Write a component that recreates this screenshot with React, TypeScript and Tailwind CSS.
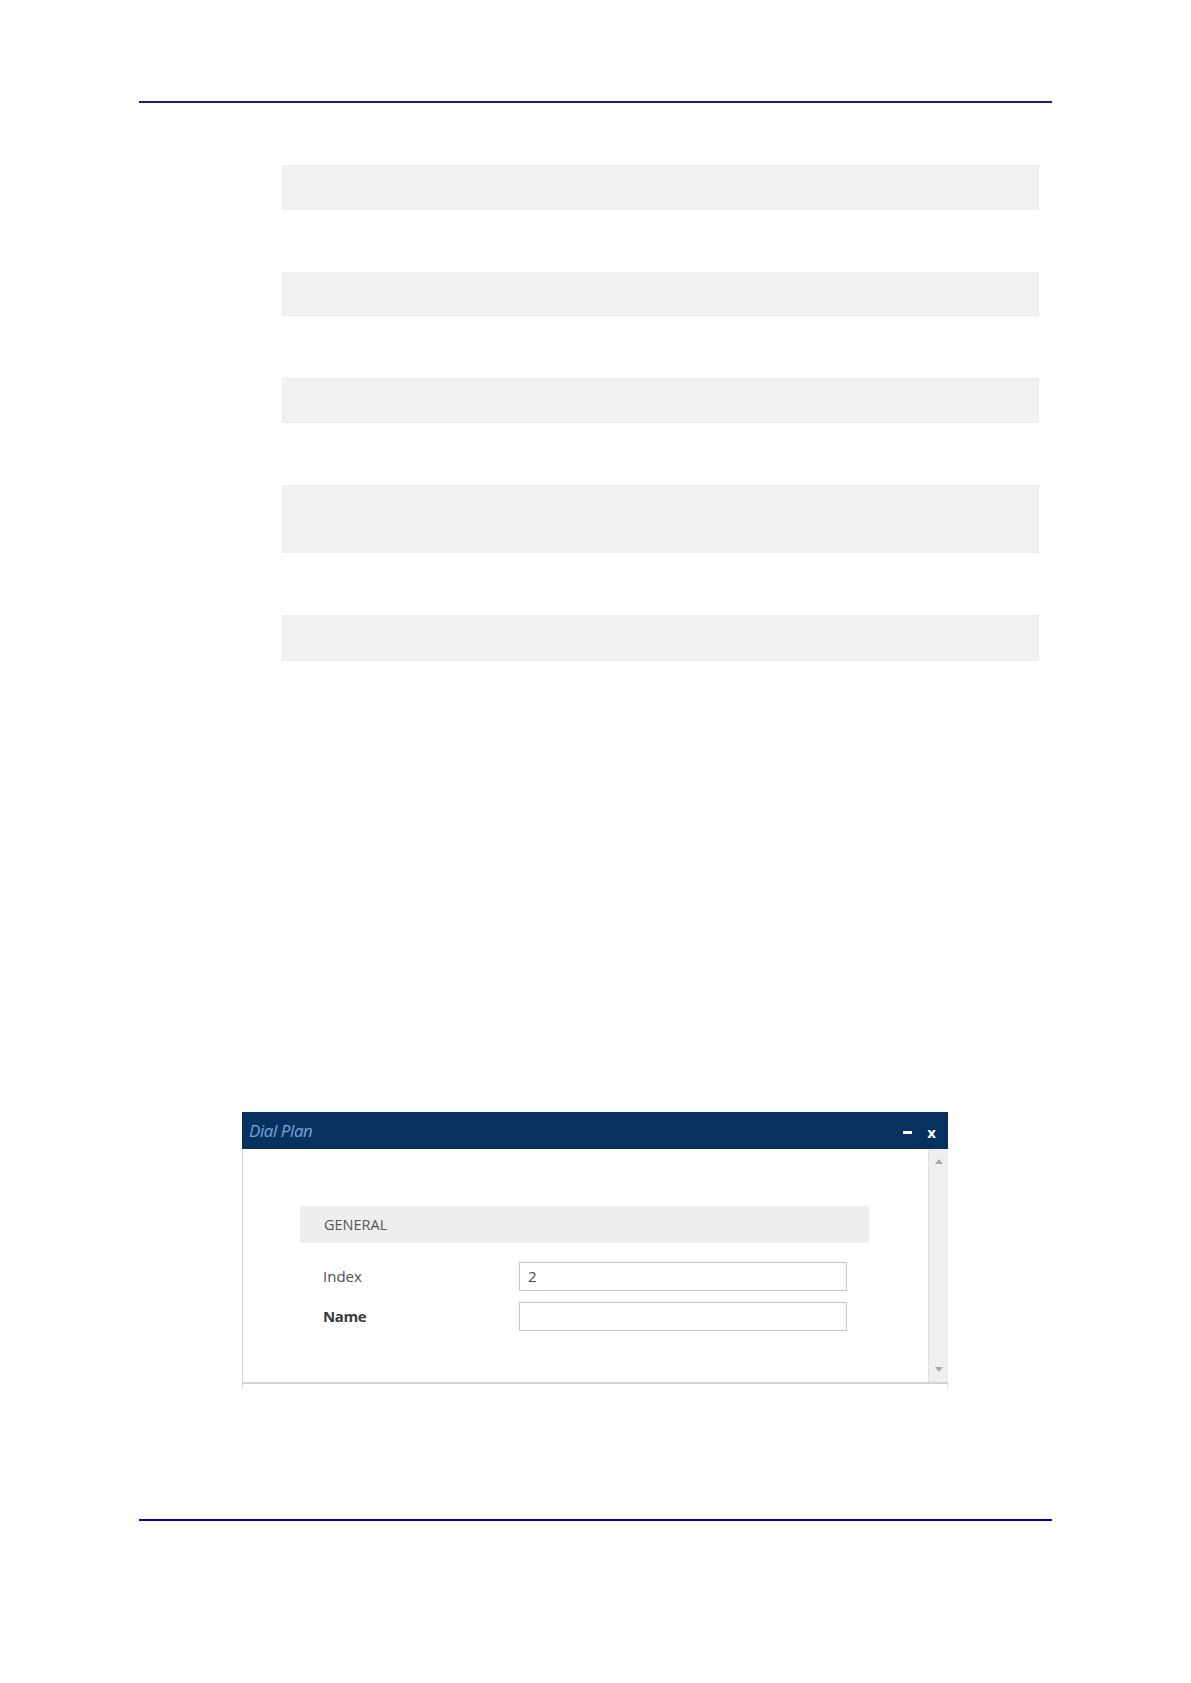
import React from "react";

const bars = ["h-[45px]", "h-[44px]", "h-[45px]", "h-[68px]", "h-[46px]"];

const Field = ({ label, value, bold }: { label: string; value?: string; bold?: boolean }) => (
  <div className="flex items-center h-[29px]">
    <span className={`w-[219px] pl-[23px] text-[15px] ${bold ? "font-bold text-[#3a3a3a] tracking-tight" : "text-[#505050]"}`}>
      {label}
    </span>
    <div className="w-[328px] h-[29px] border border-[#c8c8c8] bg-white flex items-center pl-[8px] text-[15px] text-[#444]">
      {value}
    </div>
  </div>
);

const DialPlanDialog = () => (
  <div className="ml-[103px] w-[706px] font-['Open_Sans',sans-serif]">
    <div className="h-[37px] bg-[#07325f] flex items-center justify-between pl-[7px] pr-[12px]">
      <span className="italic text-[17px] text-[#77a3d8] tracking-tight">Dial Plan</span>
      <div className="flex items-center gap-[15px] pt-[4px]">
        <span className="block w-[9px] h-[3px] bg-white" />
        <span className="text-white font-bold text-[15px] leading-none">x</span>
      </div>
    </div>
    <div className="flex h-[233px] border-l border-[#d4d4d4]">
      <div className="flex-1 pt-[57px] pl-[57px]">
        <div className="w-[569px] h-[37px] bg-[#eeeeee] flex items-center pl-[24px] text-[14.5px] text-[#555]">
          GENERAL
        </div>
        <div className="mt-[19px] flex flex-col gap-[11px]">
          <Field label="Index" value="2" />
          <Field label="Name" bold />
        </div>
      </div>
      <div className="w-[20px] bg-[#efefef] border-l border-[#e0e0e0] flex flex-col items-center justify-between py-[10px]">
        <svg width="8" height="5" viewBox="0 0 8 5"><path d="M4 0L8 5H0z" fill="#a8a8a8" /></svg>
        <svg width="8" height="5" viewBox="0 0 8 5"><path d="M0 0H8L4 5z" fill="#a8a8a8" /></svg>
      </div>
    </div>
    <div className="h-[2px] bg-[#d2d2d2]" />
    <div className="h-[5px] border-l border-r border-[#dcdcdc]" />
  </div>
);

export default function App() {
  return (
    <div className="w-[1191px] h-[1683px] bg-white pt-[101px] px-[139px]">
      <div className="h-[2px] bg-[#1c1c8c]" />
      <div className="ml-[143px] w-[757px] flex flex-col gap-[62px] mt-[62px]">
        {bars.map((h, i) => (
          <div key={i} className={`${h} bg-[#f2f2f2] border border-[#ececec]`} />
        ))}
      </div>
      <div className="mt-[451px]">
        <DialPlanDialog />
      </div>
      <div className="mt-[130px] h-[2px] bg-[#0000cc]" />
    </div>
  );
}
